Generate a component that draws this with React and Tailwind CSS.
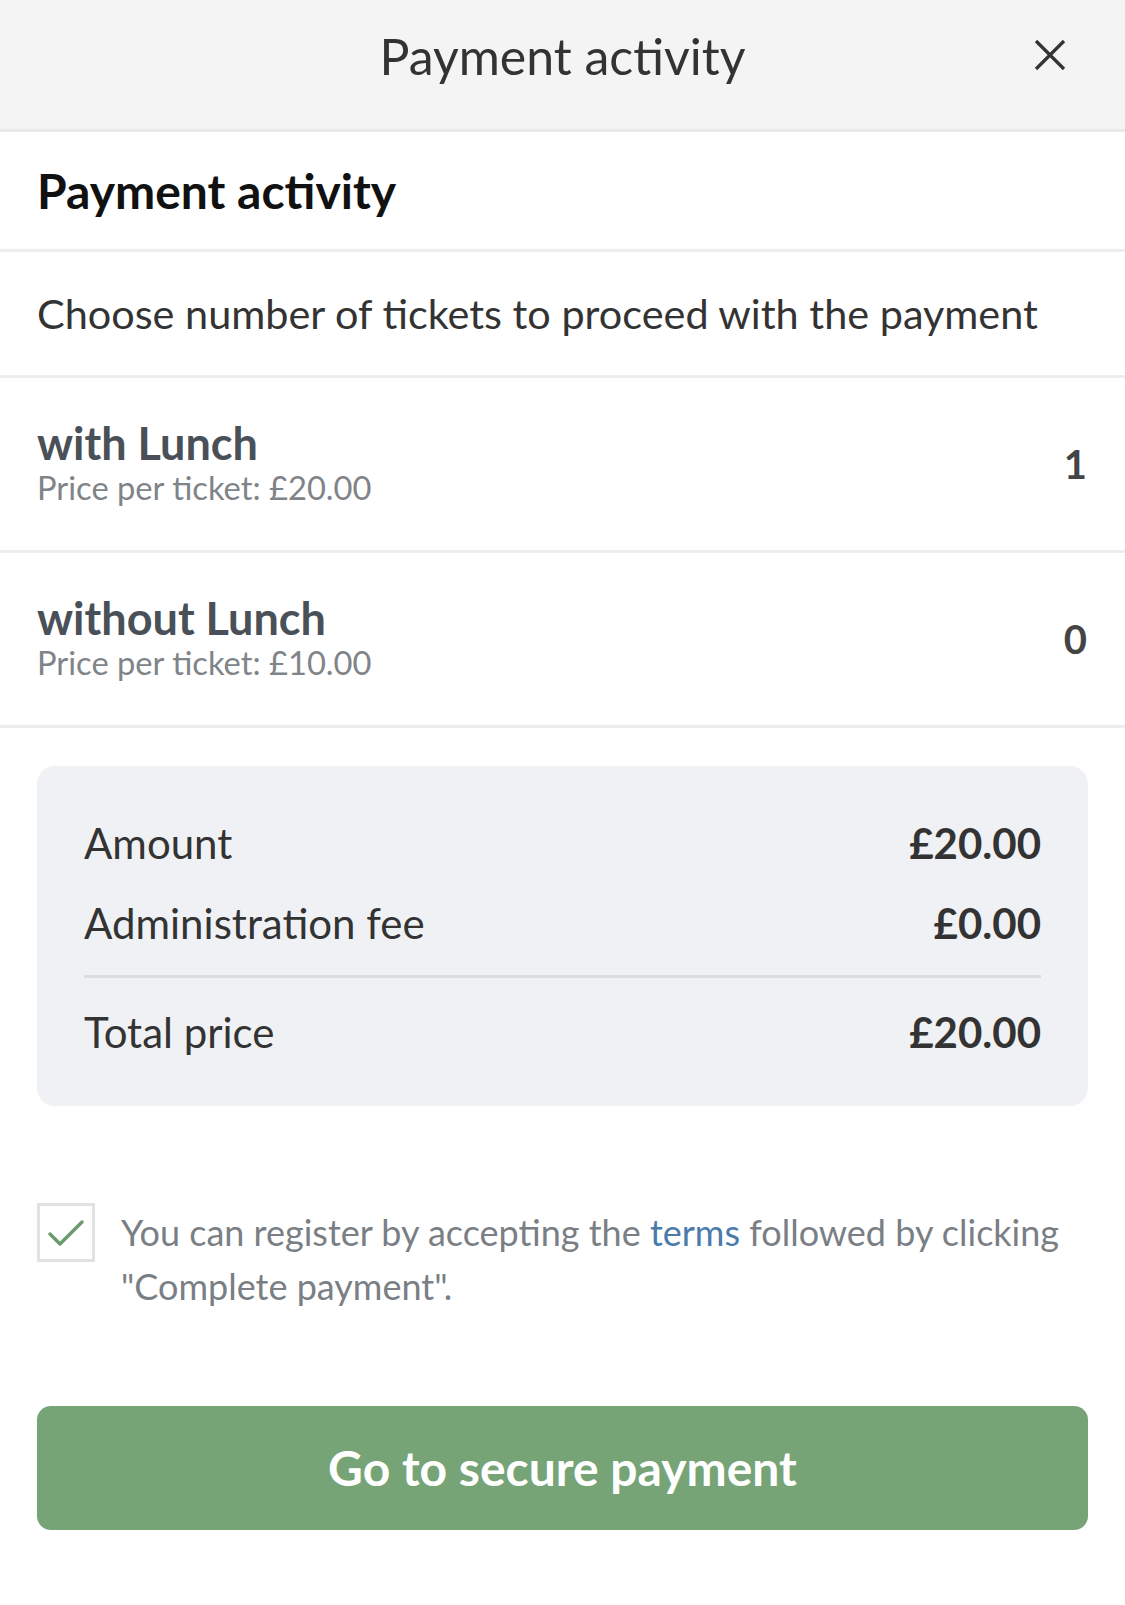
import React, { useState } from "react";

const tickets = [
  { name: "with Lunch", price: "£20.00", count: 1 },
  { name: "without Lunch", price: "£10.00", count: 0 },
];

function App() {
  const [accepted, setAccepted] = useState(true);

  return (
    <div className="w-[1125px] min-h-[1605px] bg-white font-['Lato','Liberation_Sans',sans-serif]">
      {/* header */}
      <div className="relative h-[132px] bg-[#f4f4f4] border-b-[3px] border-[#e9e9e9] flex items-center justify-center pb-[18px]">
        <h1 className="text-[50px] text-[#333333] leading-none">Payment activity</h1>
        <button className="absolute right-[58px] top-[38px] w-[34px] h-[34px] flex items-center justify-center text-[#333333]">
          <svg width="32" height="32" viewBox="0 0 32 32" fill="none" stroke="currentColor" strokeWidth="3.2">
            <path d="M2 2 L30 30 M30 2 L2 30" />
          </svg>
        </button>
      </div>

      <div className="h-[120px] border-b-[3px] border-[#ededef] flex items-center px-[37px]">
        <h2 className="text-[48px] font-bold text-[#111111] leading-none">Payment activity</h2>
      </div>

      <div className="h-[126px] border-b-[3px] border-[#ededef] flex items-center px-[37px]">
        <p className="text-[41.4px] text-[#333333] leading-none whitespace-nowrap">
          Choose number of tickets to proceed with the payment
        </p>
      </div>

      {tickets.map((t) => (
        <div
          key={t.name}
          className="h-[175px] border-b-[3px] border-[#ededef] flex items-center justify-between pl-[37px] pr-[38px]"
        >
          <div className="flex flex-col">
            <span className="text-[45px] font-bold text-[#4a5057] leading-[48px]">{t.name}</span>
            <span className="text-[32.7px] text-[#7f8489] leading-[42px]">Price per ticket: {t.price}</span>
          </div>
          <span className="text-[40px] font-bold text-[#444444]">{t.count}</span>
        </div>
      ))}

      <div className="px-[37px] pt-[38px]">
        <div className="bg-[#f0f1f4] rounded-[18px] px-[47px] pt-[37px] pb-[20px]">
          <div className="flex justify-between items-center h-[80px] text-[42px] text-[#333333]">
            <span>Amount</span>
            <span className="font-bold">£20.00</span>
          </div>
          <div className="flex justify-between items-center h-[80px] text-[42px] text-[#333333]">
            <span>Administration fee</span>
            <span className="font-bold">£0.00</span>
          </div>
          <div className="border-t-[3px] border-[#dcdde1] mt-[12px]" />
          <div className="flex justify-between items-center h-[108px] text-[42px] text-[#333333]">
            <span>Total price</span>
            <span className="font-bold">£20.00</span>
          </div>
        </div>
      </div>

      <div className="flex items-start gap-[26px] px-[37px] pt-[97px]">
        <button
          onClick={() => setAccepted(!accepted)}
          className="shrink-0 w-[58px] h-[59px] border-[3px] border-[#e2e2e4] flex items-center justify-center bg-white"
        >
          {accepted && (
            <svg width="36" height="28" viewBox="0 0 36 28" fill="none" stroke="#6b9a6e" strokeWidth="3.4" strokeLinecap="round" strokeLinejoin="round">
              <path d="M2 15 L12 25 L34 3" />
            </svg>
          )}
        </button>
        <p className="text-[36px] leading-[54px] text-[#7a7f85] mt-[2px]">
          You can register by accepting the <span className="text-[#4a7bab]">terms</span> followed by clicking "Complete payment".
        </p>
      </div>

      <div className="px-[37px] pt-[93px] pb-[74px]">
        <button className="w-full h-[124px] rounded-[14px] bg-[#76a477] text-white text-[48px] font-bold">
          Go to secure payment
        </button>
      </div>
    </div>
  );
}

export default App;
